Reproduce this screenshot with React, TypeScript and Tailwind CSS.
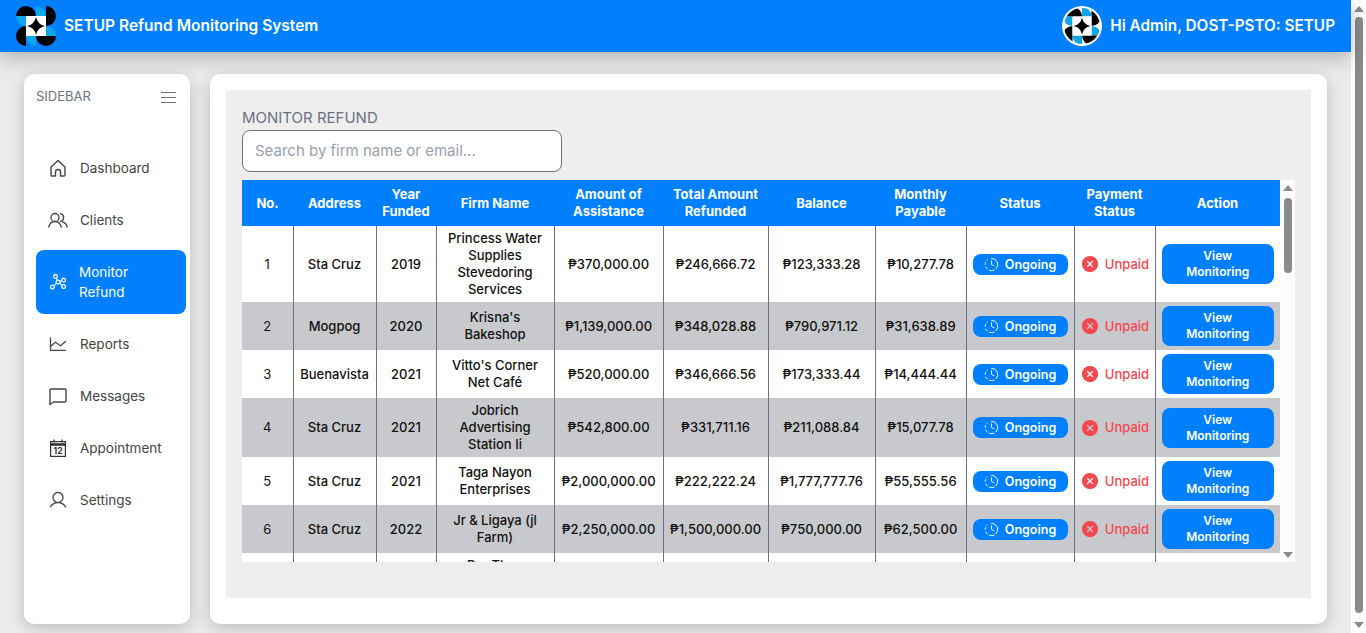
import { ClockFading } from "lucide-react";
import {
  PiGraph,
  PiChartLine,
  PiUser,
  PiXCircleFill,
} from "react-icons/pi";

const font = { fontFamily: "Inter, sans-serif" };

const rows = [
  { no: 1, address: "Sta Cruz", year: 2019, firm: "Princess Water Supplies Stevedoring Services", amount: "₱370,000.00", refunded: "₱246,666.72", balance: "₱123,333.28", monthly: "₱10,277.78" },
  { no: 2, address: "Mogpog", year: 2020, firm: "Krisna's Bakeshop", amount: "₱1,139,000.00", refunded: "₱348,028.88", balance: "₱790,971.12", monthly: "₱31,638.89" },
  { no: 3, address: "Buenavista", year: 2021, firm: "Vitto's Corner Net Café", amount: "₱520,000.00", refunded: "₱346,666.56", balance: "₱173,333.44", monthly: "₱14,444.44" },
  { no: 4, address: "Sta Cruz", year: 2021, firm: "Jobrich Advertising Station Ii", amount: "₱542,800.00", refunded: "₱331,711.16", balance: "₱211,088.84", monthly: "₱15,077.78" },
  { no: 5, address: "Sta Cruz", year: 2021, firm: "Taga Nayon Enterprises", amount: "₱2,000,000.00", refunded: "₱222,222.24", balance: "₱1,777,777.76", monthly: "₱55,555.56" },
  { no: 6, address: "Sta Cruz", year: 2022, firm: "Jr & Ligaya (jl Farm)", amount: "₱2,250,000.00", refunded: "₱1,500,000.00", balance: "₱750,000.00", monthly: "₱62,500.00" },
  { no: 7, address: "Sta Cruz", year: 2022, firm: "Bry Thea Confectionery Enterprises", amount: "₱1,000,000.00", refunded: "₱500,000.00", balance: "₱500,000.00", monthly: "₱27,777.78" },
];

const columns = [
  { label: "No.", width: "w-[51px]" },
  { label: "Address", width: "w-[83px]" },
  { label: "Year Funded", width: "w-[60px]" },
  { label: "Firm Name", width: "w-[118px]" },
  { label: "Amount of Assistance", width: "w-[109px]" },
  { label: "Total Amount Refunded", width: "w-[105px]" },
  { label: "Balance", width: "w-[107px]" },
  { label: "Monthly Payable", width: "w-[91px]" },
  { label: "Status", width: "w-[108px]" },
  { label: "Payment Status", width: "w-[81px]" },
  { label: "Action", width: "w-[125px]" },
];

// pinwheel logo, the avatar is the same mark clipped to a circle
const LogoMark = () => (
  <>
    <path d="M0 10a10 10 0 0 1 20 0z" fill="#000" />
    <path d="M0 10h10v10a10 10 0 0 1-10-10z" fill="#0ea5e9" />
    <path d="M20 10V0a10 10 0 0 1 10 10z" fill="#0ea5e9" />
    <path d="M30 0a10 10 0 0 1 0 20z" fill="#000" />
    <path d="M10 20a10 10 0 0 0 0 20z" fill="#000" />
    <path d="M20 30v10a10 10 0 0 1-10-10z" fill="#0ea5e9" />
    <path d="M30 20a10 10 0 0 1 10 10H30z" fill="#0ea5e9" />
    <path d="M20 30h20a10 10 0 0 1-20 0z" fill="#000" />
    <path d="M10 10h20v20H10z" fill="#fff" />
    <path d="M20 11q1.500 7.500 9 9q-7.500 1.500-9 9q-1.500-7.500-9-9q7.500-1.500 9-9z" fill="#000" />
  </>
);

const Logo = () => (
  <svg width="40" height="40" viewBox="0 0 40 40">
    <LogoMark />
  </svg>
);

const Avatar = () => (
  <svg width="40" height="40" viewBox="0 0 40 40">
    <clipPath id="avatar-clip">
      <circle cx="20" cy="20" r="18" />
    </clipPath>
    <circle cx="20" cy="20" r="20" fill="#fff" />
    <g clipPath="url(#avatar-clip)">
      <circle cx="20" cy="20" r="18" fill="#fff" />
      <g transform="translate(1 1) scale(0.95)">
        <LogoMark />
      </g>
    </g>
  </svg>
);

const HomeIcon = () => (
  <svg width="20" height="20" viewBox="0 0 20 20" fill="none" stroke="currentColor" strokeWidth="1.4" strokeLinejoin="round">
    <path d="M3 9 10 2.500 17 9v8a1 1 0 0 1-1 1h-3.500v-4a2.500 2.500 0 0 0-5 0v4H4a1 1 0 0 1-1-1z" />
  </svg>
);

const UsersIcon = () => (
  <svg width="20" height="20" viewBox="0 0 20 20" fill="none" stroke="currentColor" strokeWidth="1.3" strokeLinecap="round">
    <circle cx="7" cy="7.500" r="4" />
    <path d="M0.800 17c.6-3 3-5.500 6.200-5.500s5.600 2.500 6.200 5.500" />
    <path d="M12.500 3.600a4 4 0 0 1 0 7.800" />
    <path d="M14.500 12c2.300.6 4 2.600 4.700 5" />
  </svg>
);

const ChatIcon = () => (
  <svg width="20" height="20" viewBox="0 0 20 20" fill="none" stroke="currentColor" strokeWidth="1.4" strokeLinejoin="round">
    <path d="M2 4a1 1 0 0 1 1-1h14a1 1 0 0 1 1 1v11a1 1 0 0 1-1 1H5.500L2 18.500z" />
  </svg>
);

const CalendarIcon = () => (
  <svg width="16" height="18" viewBox="0 0 16 18" fill="none" stroke="#333" strokeWidth="1.2">
    <rect x="0.600" y="2.600" width="14.800" height="14.800" />
    <path d="M0.600 5.500h14.800" strokeWidth="2.600" />
    <path d="M4 0.500v3M12 0.500v3" />
    <text x="8" y="15" textAnchor="middle" fontSize="8.500" fontWeight="700" fill="#333" stroke="none" style={font}>
      12
    </text>
  </svg>
);

const navItems = [
  { label: "Dashboard", icon: <HomeIcon /> },
  { label: "Clients", icon: <UsersIcon /> },
  { label: "Monitor Refund", icon: <PiGraph size={20} />, active: true },
  { label: "Reports", icon: <PiChartLine size={20} /> },
  { label: "Messages", icon: <ChatIcon /> },
  { label: "Appointment", icon: <CalendarIcon /> },
  { label: "Settings", icon: <PiUser size={20} /> },
];

const Arrow = ({ down }: { down?: boolean }) => (
  <div className={`mx-auto h-0 w-0 border-x-[5px] border-x-transparent ${down ? "border-t-[6px] border-t-[#8a8a8a]" : "border-b-[6px] border-b-[#8a8a8a]"}`} />
);

export default function App() {
  return (
    <div style={font} className="flex h-[633px] w-full overflow-hidden bg-[#ebebeb]">
      <div className="flex h-full min-w-0 flex-1 flex-col">
        {/* Header */}
        <header className="z-10 flex h-[52px] shrink-0 items-center justify-between bg-[#0080ff] px-4 text-white shadow-[0_6px_20px_rgba(0,0,0,0.25)]">
          <div className="flex items-center gap-2">
            <Logo />
            <span className="text-[15.5px] font-semibold">SETUP Refund Monitoring System</span>
          </div>
          <div className="flex items-center gap-2">
            <Avatar />
            <span className="text-[15.3px] font-semibold">Hi Admin, DOST-PSTO: SETUP</span>
          </div>
        </header>

        <div className="flex min-h-0 flex-1 gap-5 px-6 pb-[9px] pt-[22px]">
          {/* Sidebar */}
          <aside className="flex w-[166px] shrink-0 flex-col rounded-[10px] bg-white shadow-[0_4px_16px_rgba(0,0,0,0.2)]">
            <div className="flex h-[46px] items-center justify-between pl-3 pr-3.5">
              <span className="text-[13px] text-gray-500">SIDEBAR</span>
              <div className="flex w-[15px] flex-col gap-1">
                <div className="h-px bg-gray-500" />
                <div className="h-px bg-gray-500" />
                <div className="h-px bg-gray-500" />
              </div>
            </div>
            <nav className="mt-[27px] flex flex-col gap-2.5 pl-3 pr-1">
              {navItems.map((item) => (
                <div
                  key={item.label}
                  className={`flex items-center rounded-lg pl-[12px] ${
                    item.active ? "-my-px h-16 gap-[11px] bg-[#0080ff] text-white" : "h-[42px] gap-3 text-[#444]"
                  }`}
                >
                  <span className="flex w-5 justify-center">{item.icon}</span>
                  <span className={`text-[13.5px] ${item.active ? "w-[70px] leading-5" : ""}`}>{item.label}</span>
                </div>
              ))}
            </nav>
          </aside>

          {/* Main */}
          <main className="min-w-0 flex-1 rounded-[10px] bg-white p-4 shadow-[0_4px_16px_rgba(0,0,0,0.2)]">
            <div className="flex h-[508px] flex-col bg-[#eeeeee] px-4 pt-[18px]">
              <h1 className="text-[15px] leading-5 text-gray-500">MONITOR REFUND</h1>
              <input
                placeholder="Search by firm name or email..."
                className="mt-[2px] h-[42px] w-80 shrink-0 rounded-lg border border-gray-500 bg-white px-3 pb-0.5 text-[15px] outline-none placeholder:text-gray-400"
              />
              <div className="mt-2 flex h-[382px] w-[1053px] overflow-hidden bg-white">
                <div className="h-full w-[1038px] overflow-hidden">
                  <table className="w-full table-fixed border-collapse text-center text-[13px] leading-[17px] text-[#111]">
                    <thead>
                      <tr className="h-[46px] bg-[#0080ff] text-white">
                        {columns.map((c) => (
                          <th key={c.label} className={`${c.width} px-1.5 font-bold`}>
                            {c.label}
                          </th>
                        ))}
                      </tr>
                    </thead>
                    <tbody>
                      {rows.map((r) => (
                        <tr key={r.no} className={r.no % 2 === 0 ? "bg-[#c8c9cd]" : "bg-white"}>
                          <td className="p-1">{r.no}</td>
                          <td className="border-l border-gray-500 p-1 font-medium">{r.address}</td>
                          <td className="border-l border-gray-500 p-1 font-medium">{r.year}</td>
                          <td className="border-l border-gray-500 px-2 py-1 font-medium">{r.firm}</td>
                          <td className="border-l border-gray-500 p-1 font-medium">{r.amount}</td>
                          <td className="border-l border-gray-500 p-1 font-medium">{r.refunded}</td>
                          <td className="border-l border-gray-500 p-1 font-medium">{r.balance}</td>
                          <td className="border-l border-gray-500 p-1 font-medium">{r.monthly}</td>
                          <td className="border-l border-gray-500 px-1.5 py-1">
                            <div className="flex h-[21px] items-center justify-center gap-1.5 rounded-lg bg-[#0080ff] text-[12.5px] font-semibold text-white">
                              <ClockFading size={15} strokeWidth={1.5} />
                              Ongoing
                            </div>
                          </td>
                          <td className="border-l border-gray-500 p-1">
                            <div className="flex items-center justify-center gap-[5px] font-medium text-[#f5484e]">
                              <PiXCircleFill size={20} className="shrink-0" />
                              Unpaid
                            </div>
                          </td>
                          <td className="border-l border-gray-500 px-1.5 py-1">
                            <button className="h-10 w-28 rounded-lg bg-[#0080ff] px-3 text-[12px] font-semibold leading-4 text-white">
                              View Monitoring
                            </button>
                          </td>
                        </tr>
                      ))}
                    </tbody>
                  </table>
                </div>
                {/* table scrollbar */}
                <div className="flex w-[15px] shrink-0 flex-col items-center bg-[#fdfdfd] pt-[5px]">
                  <Arrow />
                  <div className="mt-[7px] h-[75px] w-2 rounded-full bg-[#8a8a8a]" />
                  <div className="flex-1" />
                  <div className="pb-1">
                    <Arrow down />
                  </div>
                </div>
              </div>
            </div>
          </main>
        </div>
      </div>

      {/* page scrollbar */}
      <div className="flex w-[15px] shrink-0 flex-col items-center bg-[#fdfdfd] pb-[5px] pt-[6px]">
        <Arrow />
        <div className="mt-[5px] w-2 flex-1 rounded-full bg-[#8a8a8a]" />
        <div className="mt-[9px]">
          <Arrow down />
        </div>
      </div>
    </div>
  );
}
